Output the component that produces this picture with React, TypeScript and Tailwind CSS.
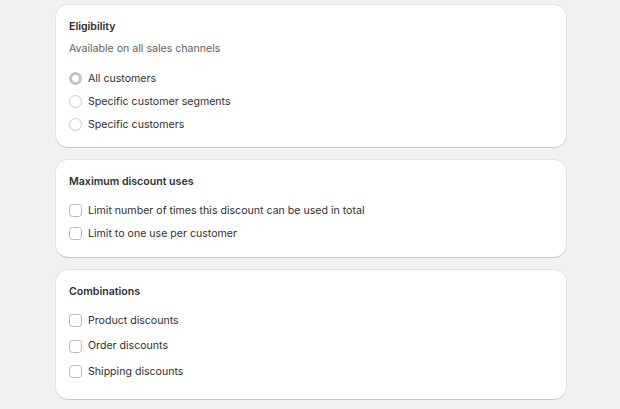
import React from 'react';

const font = { fontFamily: 'Inter, "Noto Sans", sans-serif' };

const Card: React.FC<{ title: string; className?: string; children: React.ReactNode }> = ({ title, className, children }) => (
  <div
    className={`bg-white rounded-[12px] px-[13px] shadow-[0_1px_0_0_rgba(0,0,0,0.12),0_0_0_1px_rgba(0,0,0,0.05)] ${className ?? ''}`}
  >
    <h2 className="text-[10.6px] font-semibold text-[#303030] leading-[16px]">{title}</h2>
    {children}
  </div>
);

const Radio: React.FC<{ label: string; checked?: boolean }> = ({ label, checked }) => (
  <label className="flex items-center gap-[6px] h-[23px]">
    {checked ? (
      <span className="w-[13px] h-[13px] rounded-full border-[3.5px] border-[#c4c4c4] bg-white" />
    ) : (
      <span className="w-[13px] h-[13px] rounded-full border border-[#c9c9c9] bg-white" />
    )}
    <span className="text-[10.6px] text-[#303030]">{label}</span>
  </label>
);

const Checkbox: React.FC<{ label: string; h: string }> = ({ label, h }) => (
  <label className={`flex items-center gap-[6px] ${h}`}>
    <span className="w-[13px] h-[13px] rounded-[3.5px] border border-[#b8b8b8] bg-white" />
    <span className="text-[10.6px] text-[#303030]">{label}</span>
  </label>
);

export default function App() {
  return (
    <div className="min-h-[409px] bg-[#f1f1f1] pt-[5px]" style={font}>
      <div className="w-[510px] ml-[56px] flex flex-col gap-[13px]">
        <Card title="Eligibility" className="pt-[14px] h-[142px]">
          <p className="mt-[6px] text-[10.6px] text-[#616161] leading-[16px]">Available on all sales channels</p>
          <div className="mt-[10px] flex flex-col">
            <Radio label="All customers" checked />
            <Radio label="Specific customer segments" />
            <Radio label="Specific customers" />
          </div>
        </Card>
        <Card title="Maximum discount uses" className="pt-[14px] h-[97px]">
          <div className="mt-[9px] flex flex-col">
            <Checkbox label="Limit number of times this discount can be used in total" h="h-[23px]" />
            <Checkbox label="Limit to one use per customer" h="h-[23px]" />
          </div>
        </Card>
        <Card title="Combinations" className="pt-[14px] h-[129px]">
          <div className="mt-[8px] flex flex-col">
            <Checkbox label="Product discounts" h="h-[25.5px]" />
            <Checkbox label="Order discounts" h="h-[25.5px]" />
            <Checkbox label="Shipping discounts" h="h-[25.5px]" />
          </div>
        </Card>
      </div>
    </div>
  );
}
